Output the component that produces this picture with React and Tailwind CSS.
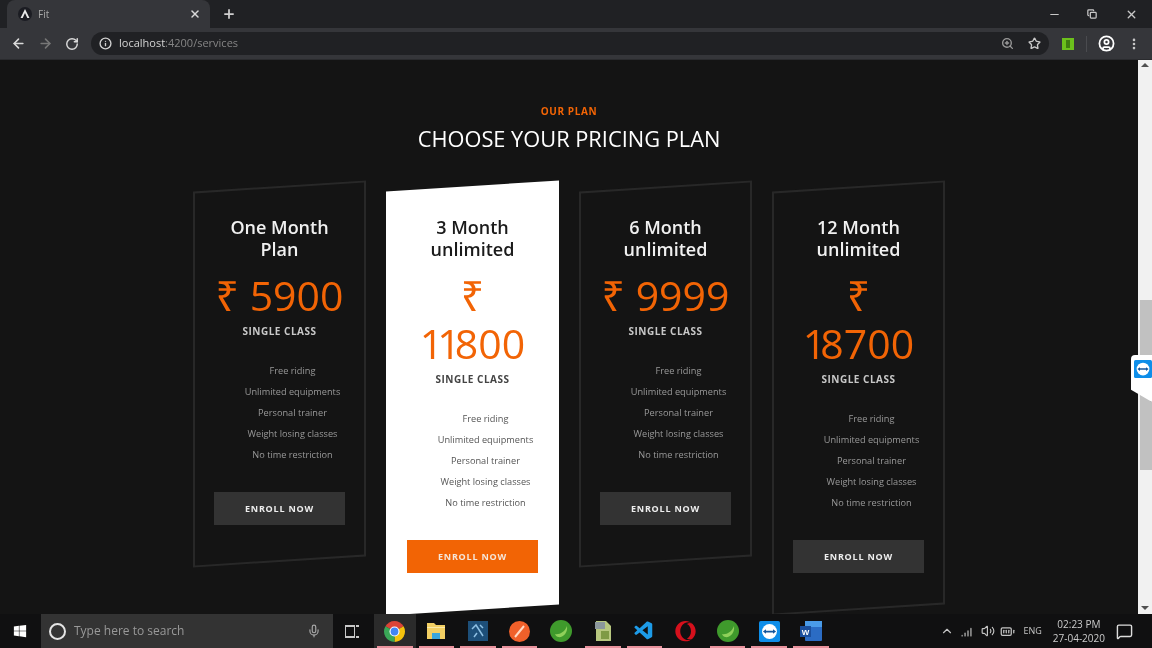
import React from 'react';
import {
  ArrowLeft, ArrowRight, RotateCw, Info, ZoomIn, Star, CircleUser, MoreVertical,
  X, Plus, Minus, Copy, Mic, ChevronUp, Volume2, BatteryFull, MessageSquare, SignalHigh,
} from 'lucide-react';
import { FaWindows, FaOpera } from 'react-icons/fa';
import { VscVscode } from 'react-icons/vsc';

const plans = [
  { title: ['One Month', 'Plan'], price: '5900' },
  { title: ['3 Month', 'unlimited'], price: '11800', featured: true },
  { title: ['6 Month', 'unlimited'], price: '9999' },
  { title: ['12 Month', 'unlimited'], price: '18700' },
];

const features = ['Free riding', 'Unlimited equipments', 'Personal trainer', 'Weight losing classes', 'No time restriction'];

// the reference font has a narrow "1", Open Sans doesn't
const Price = ({ value }) => (
  <div className="mt-[11px] text-[41px] leading-[48px] text-[#f26405]">
    <span className="inline-block">₹</span>{' '}
    <span className="inline-block">
      {[...value].map((c, i) => (
        c === '1' ? <span key={i} className="tracking-[-6px]">{c}</span> : c
      ))}
    </span>
  </div>
);

const PlanCard = ({ plan }) => {
  const { featured } = plan;
  return (
    <div className="relative w-[173px] shrink-0 px-5 pt-[30px] pb-[37px] text-center">
      <div className={`absolute inset-0 -skew-y-[3.64deg] ${featured ? 'bg-white' : 'border-2 border-[#282828] bg-[#141414]'}`} />
      <div className="relative">
        <h3 className={`text-[18px] leading-[22px] font-semibold ${featured ? 'text-[#1b1b1b]' : 'text-[#f0f0f0]'}`}>
          {plan.title[0]}<br />{plan.title[1]}
        </h3>
        <Price value={plan.price} />
        <div className={`mt-[5px] text-[10px] leading-[14px] font-bold tracking-[0.5px] ${featured ? 'text-[#444444]' : 'text-[#c8c8c8]'}`}>SINGLE CLASS</div>
        <ul className={`mt-[22px] pl-[26px] text-[9.200px] leading-[21px] ${featured ? 'text-[#555555]' : 'text-[#999999]'}`}>
          {features.map(f => <li key={f} className="whitespace-nowrap">{f}</li>)}
        </ul>
        <div className={`mx-auto mt-[27px] flex h-[33px] w-[131px] items-center justify-center text-[9px] font-bold tracking-[0.8px] ${featured ? 'bg-[#f26405] text-[#f5e6da]' : 'bg-[#333333] text-[#eeeeee]'}`}>
          ENROLL NOW
        </div>
      </div>
    </div>
  );
};

const BrowserChrome = () => (
  <div className="shrink-0 bg-[#202124]">
    <div className="flex h-[28px] items-center">
      <div className="ml-[7px] flex h-full w-[203px] items-center rounded-t-lg bg-[#35363a] pl-[11px] pr-[9px]">
        <svg width="14" height="14" viewBox="0 0 14 14">
          <circle cx="7" cy="7" r="7" fill="#1b1c22" />
          <path d="M7 2 11.5 11H9.3L7 6 4.7 11H2.5Z" fill="#e8e8e8" />
        </svg>
        <span className="ml-[6px] flex-1 text-[10px] text-[#a8a8a8]">Fit</span>
        <X size={12} strokeWidth={3} className="text-[#d8d8d8]" />
      </div>
      <Plus size={14} strokeWidth={3} className="ml-[12px] text-[#cfcfcf]" />
      <div className="ml-auto flex items-center text-[#c8c8c8]">
        <Minus size={13} strokeWidth={2} className="mr-[26px]" />
        <Copy size={10} strokeWidth={3} className="mr-[28px]" />
        <X size={13} strokeWidth={2.5} className="mr-[14px]" />
      </div>
    </div>
    <div className="flex h-[32px] items-center border-b border-[#2a2b2e] bg-[#35363a]">
      <ArrowLeft size={15} strokeWidth={2.5} className="ml-[11px] text-[#dadada]" />
      <ArrowRight size={15} strokeWidth={2.5} className="ml-[12px] text-[#777777]" />
      <RotateCw size={14} strokeWidth={2.5} className="ml-[12px] text-[#dadada]" />
      <div className="ml-[12px] flex h-[23px] w-[958px] items-center rounded-full bg-[#202124] pl-2 pr-[8px]">
        <Info size={13} strokeWidth={2.5} className="text-[#d0d0d0]" />
        <span className="ml-[7px] flex-1 text-[11px] text-[#d4d4d4]">localhost<span className="text-[#858585]">:4200/services</span></span>
        <ZoomIn size={13} strokeWidth={2.5} className="text-[#9a9a9a]" />
        <Star size={13} strokeWidth={2.5} className="ml-[14px] text-[#c8c8c8]" />
      </div>
      <div className="ml-[13px] flex h-[12px] w-[12px] items-center justify-center bg-[#6cc01c]">
        <div className="h-[8px] w-[4px] bg-[#3f7d10]" />
      </div>
      <div className="ml-[12px] h-[16px] w-px bg-[#4a4b4f]" />
      <CircleUser size={17} strokeWidth={2.5} className="ml-[11px] text-white" />
      <MoreVertical size={14} strokeWidth={2.5} className="ml-[12px] text-[#c8c8c8]" />
    </div>
  </div>
);

const Scrollbar = () => (
  <div className="flex w-[14px] shrink-0 flex-col items-center bg-[#f1f1f1]">
    <div className="mt-[3px] h-0 w-0 border-x-[4px] border-b-[4px] border-x-transparent border-b-[#505050]" />
    <div className="ml-[2px] mt-[233px] h-[170px] w-[12px] bg-[#c1c1c1]" />
    <div className="mt-auto mb-[4px] h-0 w-0 border-x-[4px] border-t-[4px] border-x-transparent border-t-[#505050]" />
  </div>
);

const TeamViewerIcon = ({ size = 24 }) => (
  <svg width={size} height={size} viewBox="0 0 24 24">
    <rect width="24" height="24" rx="2" fill="#0e8ee9" />
    <circle cx="12" cy="12" r="8.500" fill="#ffffff" />
    <path d="M4.500 12 8 9.500V11H16V9.500L19.500 12 16 14.500V13H8V14.500Z" fill="#14569c" />
  </svg>
);

const Spring = () => (
  <svg width="22" height="22" viewBox="0 0 22 22">
    <circle cx="11" cy="11" r="11" fill="#3f9a2c" />
    <path d="M5 14C9 15 15 12 17 6 18 13 13 18 8 17 6.500 16.600 5.500 15.500 5 14Z" fill="#8fd05a" />
  </svg>
);

const Chrome = () => (
  <svg width="21" height="21" viewBox="0 0 20 20">
    <path d="M10 10 1.340 5A10 10 0 0 1 18.660 5Z" fill="#db4437" />
    <path d="M10 10 18.660 5A10 10 0 0 1 10 20Z" fill="#f4c20d" />
    <path d="M10 10 10 20A10 10 0 0 1 1.340 5Z" fill="#3aa757" />
    <circle cx="10" cy="10" r="4.800" fill="#ffffff" />
    <circle cx="10" cy="10" r="3.700" fill="#4285f4" />
  </svg>
);

const taskIcons = [
  { key: 'chrome', active: true, pink: true, icon: <Chrome /> },
  {
    key: 'files', pink: true, icon: (
      <svg width="20" height="18" viewBox="0 0 20 18">
        <path d="M1 1H8L10 3H19V17H1Z" fill="#f2cf63" />
        <rect x="1" y="5" width="18" height="1" fill="#fbe9a8" />
        <rect x="6" y="11" width="8" height="6" fill="#3aa6dd" />
      </svg>
    ),
  },
  {
    key: 'ps', pink: true, icon: (
      <svg width="20" height="20" viewBox="0 0 20 20">
        <rect width="20" height="20" fill="#1d4f79" />
        <path d="M4 8 8 4 15 15M9 12 6 16M12 4 15 7" stroke="#8fc1e4" strokeWidth="1.500" fill="none" />
      </svg>
    ),
  },
  {
    key: 'postman', pink: true, icon: (
      <svg width="21" height="21" viewBox="0 0 21 21">
        <circle cx="10.500" cy="10.500" r="10.500" fill="#f0602a" />
        <path d="M6 16 15 5" stroke="#ffd9c4" strokeWidth="2" />
      </svg>
    ),
  },
  { key: 'spring1', icon: <Spring /> },
  {
    key: 'archive', pink: true, icon: (
      <svg width="20" height="22" viewBox="0 0 20 22">
        <path d="M3 1H13L18 6V21H3Z" fill="#b7c77f" />
        <rect x="2" y="2" width="10" height="7" fill="#8b979c" />
        <rect x="8" y="11" width="8" height="8" fill="#7f9a45" />
      </svg>
    ),
  },
  { key: 'vscode', pink: true, icon: <VscVscode size={22} className="text-[#1d9be8]" /> },
  { key: 'opera', icon: <FaOpera size={21} className="text-[#d5101c]" /> },
  { key: 'spring2', pink: true, icon: <Spring /> },
  { key: 'teamviewer', pink: true, icon: <TeamViewerIcon size={21} /> },
  {
    key: 'word', pink: true, icon: (
      <svg width="22" height="20" viewBox="0 0 22 20">
        <rect x="5" y="0" width="17" height="20" rx="1" fill="#2b6cc4" />
        <rect x="5" y="0" width="17" height="6" fill="#4a9be8" />
        <rect x="0" y="5" width="11" height="11" fill="#1b4f9c" />
        <text x="5.500" y="13.500" fontSize="8" fontWeight="700" textAnchor="middle" fill="#ffffff" fontFamily="'Liberation Sans', sans-serif">W</text>
      </svg>
    ),
  },
];

const Taskbar = () => (
  <div className="flex h-[34px] shrink-0 items-center bg-[#101011]">
    <FaWindows size={14} className="ml-[13px] text-white" />
    <div className="ml-[14px] flex h-full w-[292px] items-center bg-[#333333] pl-[8px] pr-[12px]">
      <div className="h-[17px] w-[17px] rounded-full border-[2px] border-[#e4e4e4]" />
      <span className="ml-[8px] flex-1 text-[12px] text-[#999999]">Type here to search</span>
      <Mic size={14} className="text-[#a8a8a8]" />
    </div>
    <div className="ml-[12px] flex h-[13px] w-[15px] items-center gap-px">
      <div className="h-full w-[10px] border-y-[2px] border-x border-[#c8c8c8]" />
      <div className="h-full w-[3px] border-y-[2px] border-[#c8c8c8]" />
    </div>
    <div className="ml-[14px] flex h-full">
      {taskIcons.map(t => (
        <div key={t.key} className={`relative flex h-full w-[41.6px] items-center justify-center ${t.active ? 'bg-[#2b2b2b]' : ''}`}>
          {t.icon}
          {t.pink && <div className="absolute bottom-0 left-[3px] right-[3px] h-[2px] bg-[#e8919c]" />}
        </div>
      ))}
    </div>
    <div className="ml-auto flex items-center text-[#c4c4c4]">
      <ChevronUp size={14} />
      <SignalHigh size={14} strokeWidth={3} className="ml-[7px] text-[#888888]" />
      <Volume2 size={14} className="ml-[6px]" />
      <BatteryFull size={15} className="ml-[5px]" />
      <span className="ml-[8px] text-[9px]">ENG</span>
      <div className="ml-[11px] flex flex-col items-center text-[10px] leading-[14px] text-[#cccccc]">
        <span>02:23 PM</span>
        <span>27-04-2020</span>
      </div>
      <MessageSquare size={17} className="ml-[11px] mr-[19px] text-[#dddddd]" />
    </div>
  </div>
);

export default function App() {
  return (
    <div
      className="relative flex h-[648px] w-[1152px] flex-col overflow-hidden bg-[#141414] blur-[0.6px]"
      style={{ fontFamily: '"Open Sans", "Noto Sans", sans-serif' }}
    >
      <BrowserChrome />
      <div className="flex min-h-0 flex-1">
        <main className="min-w-0 flex-1 overflow-hidden">
          <div className="pt-[44px] text-center">
            <div className="text-[10px] leading-[14px] font-bold tracking-[0.6px] text-[#f26405]">OUR PLAN</div>
            <h2 className="mt-[6px] text-[21.800px] leading-[30px] text-white">CHOOSE YOUR PRICING PLAN</h2>
          </div>
          <div className="mt-[32px] flex items-start justify-center gap-5">
            {plans.map(p => <PlanCard key={p.price} plan={p} />)}
          </div>
        </main>
        <Scrollbar />
      </div>
      <Taskbar />
      {/* TeamViewer side tab */}
      <div className="absolute right-0 top-[355px] h-[47px] w-[21px] rounded-l-[4px] bg-white pl-[3px] pt-[5px] shadow-[0_0_2px_#000] [clip-path:polygon(0_0,100%_0,100%_100%,0_74%)]">
        <TeamViewerIcon size={18} />
      </div>
    </div>
  );
}
